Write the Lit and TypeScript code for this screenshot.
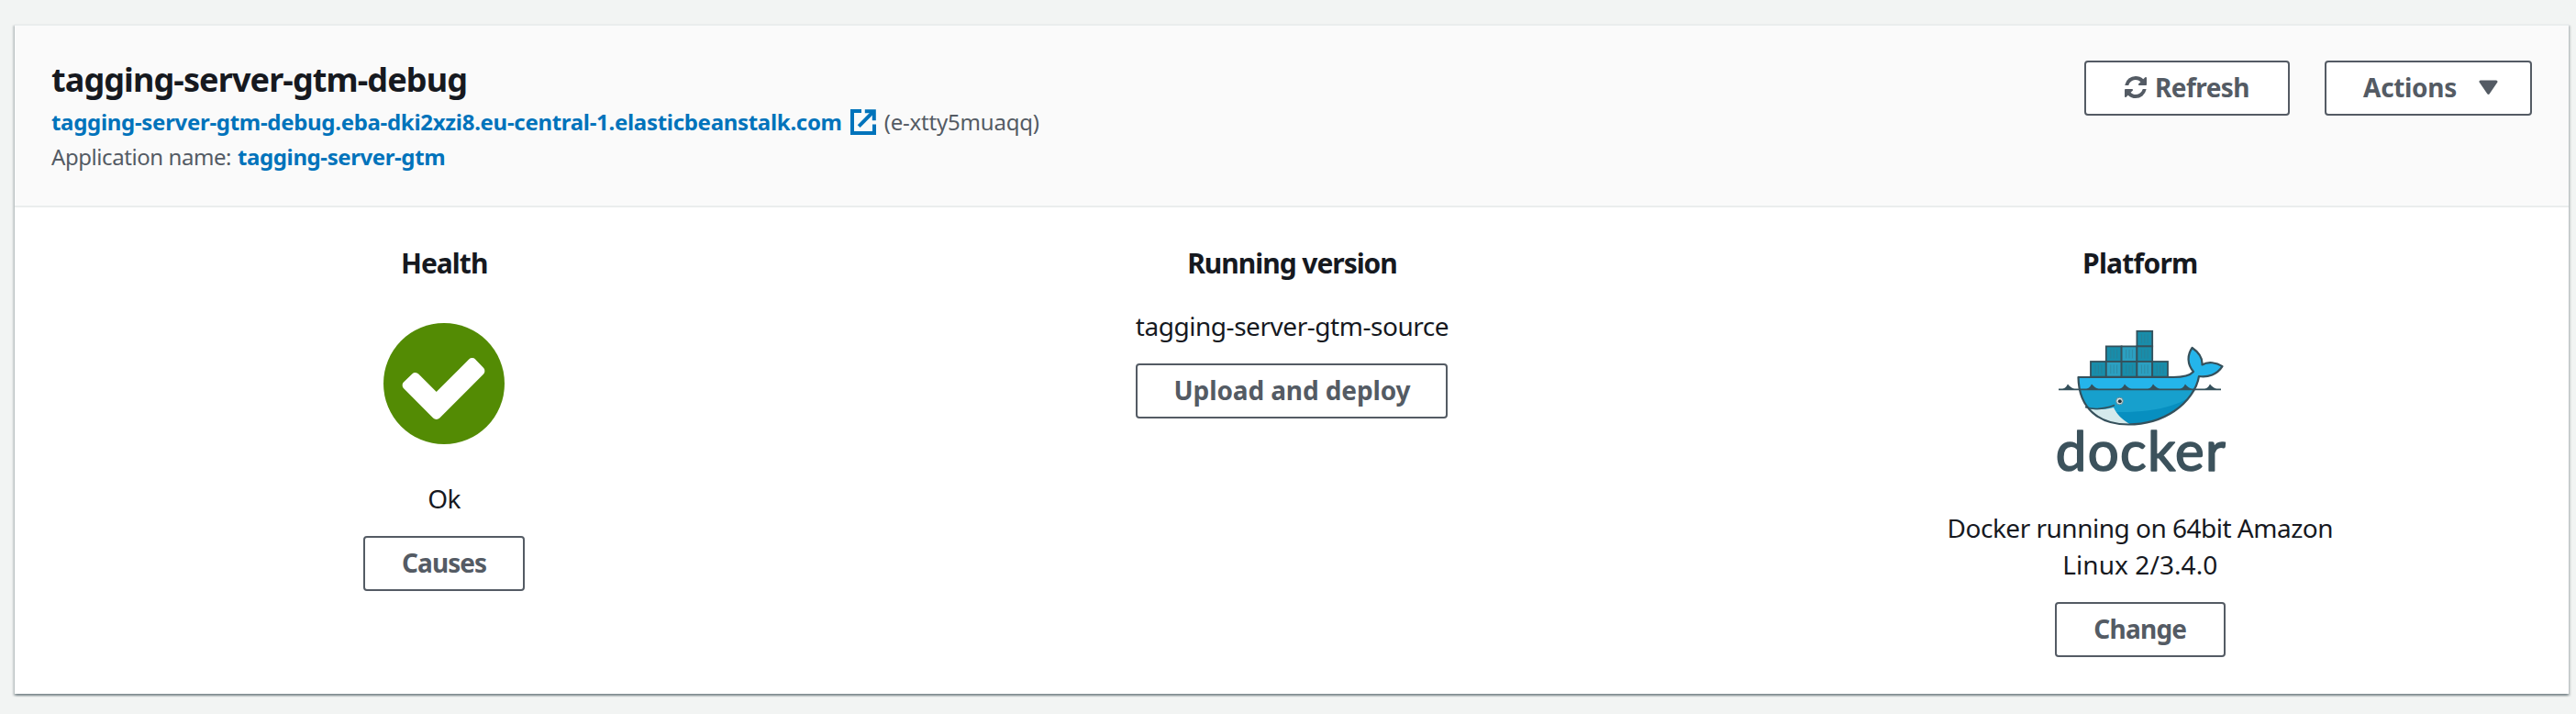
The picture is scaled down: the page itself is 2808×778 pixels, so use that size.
import { LitElement, html, svg, css } from "lit";
import { customElement } from "lit/decorators.js";

const refreshIcon = html`<svg class="refresh-icon" viewBox="0 0 1536 1536" aria-hidden="true">
  <path d="M1511 928q0 5-1 7-64 268-268 434.5T764 1536q-146 0-282.5-55T238 1324l-129 129q-19 19-45 19t-45-19-19-45V960q0-26 19-45t45-19h448q26 0 45 19t19 45-19 45l-137 137q71 66 161 102t187 36q134 0 250-65t186-179q11-17 53-117 8-23 30-23h192q13 0 22.5 9.5t9.5 22.5zm25-800v448q0 26-19 45t-45 19h-448q-26 0-45-19t-19-45 19-45l138-138Q969 256 768 256q-134 0-250 65T332 500q-11 17-53 117-8 23-30 23H50q-13 0-22.5-9.5T18 608v-7q65-268 270-434.5T768 0q146 0 284 55.5T1297 212l130-129q19-19 45-19t45 19 19 45z" />
</svg>`;

const externalIcon = html`<svg class="external-icon" viewBox="0 0 28 28" aria-hidden="true">
  <path d="M12 2H2V26H26V16.5" />
  <path d="M9.2 18.6L24.5 3.2" />
  <path d="M15.8 2.200H25.800V12.2" />
</svg>`;

const caretIcon = html`<svg class="caret-icon" viewBox="0 0 21 16" aria-hidden="true">
  <path d="M2 2H19L10.5 14.3Z" />
</svg>`;

const checkIcon = html`<svg class="check-icon" viewBox="0 0 132 132" role="img" aria-label="Ok">
  <circle cx="66" cy="66" r="66" />
  <path d="M25.6 67.8L34.7 59.1L57.7 82.1L96.7 43.1L105.4 52.2L57.7 99.9Z" />
</svg>`;

const containers: [number, number, boolean][] = [
  [94.4, 10.8, false],
  [60.8, 27.4, false], [77.6, 27.4, true], [94.4, 27.4, false],
  [44, 44, false], [60.8, 44, true], [77.6, 44, false], [94.4, 44, true], [111.2, 44, false],
];

const waves = [20, 46, 82, 113, 148, 175];

const bodyPath =
  "M30.5 61H134C144 61 152 59.500 156 55C149 47 149 37 154.600 29C162 34 166 40 165.500 47.500C172 43.500 181 45 187.500 49.200C182 58 172 61.500 162 60C160 73 150 88 135 98C120 108 104 112.500 85 112.500C54 112.500 31 96 30.500 61Z";

const dockerLogo = html`<svg class="docker-logo" viewBox="0 0 196 190" role="img" aria-label="docker">
  <defs>
    <clipPath id="hull"><path d=${bodyPath} /></clipPath>
  </defs>
  ${containers.map(
    ([x, y, light]) => svg`<g>
      <rect class=${light ? "box light" : "box"} x=${x} y=${y} width="16.8" height="16.6" />
      <path class="slats" d=${`M${x + 5} ${y + 3.5}v9.600m3.400 -9.600v9.600m3.400 -9.600v9.600`} />
    </g>`
  )}
  <path class="sky" d=${bodyPath} />
  <g clip-path="url(#hull)">
    <rect class="sea" x="0" y="74" width="196" height="45" />
    <path class="deep" d="M165 74C145 90 120 100 70 99L84 114H165Z" />
    <path class="jaw" d="M38 94C48 97.500 58 96.500 69 94C72 101 78 107 88 113H50Z" />
  </g>
  <path class="mouth" d="M38 93.500C48 97 59 95.500 70 91.500" />
  <circle class="eye" cx="75.500" cy="87" r="3.800" />
  <circle class="pupil" cx="75.800" cy="87.200" r="2" />
  <path class="line" d=${bodyPath} />
  <path class="waterline" d="M9 74.300H186" />
  ${waves.map(
    (x) => svg`<path class="wave" d=${`M${x - 9} 75Q${x - 3} 73 ${x - 1} 68.500Q${x + 2} 72.500 ${x + 9} 75Z`} />`
  )}
  <text class="wordmark" x="5.800" y="162.800" textLength="185" lengthAdjust="spacing">docker</text>
</svg>`;

@customElement("app-root")
export class AppRoot extends LitElement {
  static styles = css`
    :host {
      display: block;
      box-sizing: border-box;
      height: 778px;
      padding: 26px 8px 22px 16px;
      background: #f2f4f3;
      color: #16191f;
      font: 28px/40px "Noto Sans", "Open Sans", sans-serif;
    }
    .card {
      box-sizing: border-box;
      height: 730px;
      border-top: 2px solid #eaeded;
      background: #fff;
      box-shadow: 0 2px 2px rgba(0, 28, 36, 0.3), 2px 2px 2px rgba(0, 28, 36, 0.15),
        -2px 2px 2px rgba(0, 28, 36, 0.15);
    }
    .header {
      display: flex;
      justify-content: space-between;
      align-items: flex-start;
      box-sizing: border-box;
      height: 198px;
      padding: 37px 40px 0;
      border-bottom: 2px solid #eaeded;
      background: #fafafa;
    }
    h1 {
      margin: 0 0 5px;
      font-size: 36px;
      line-height: 44px;
      letter-spacing: -0.9px;
    }
    .line-row {
      display: flex;
      align-items: center;
      height: 38px;
      color: #545b64;
      font-size: 24px;
      line-height: 38px;
      white-space: nowrap;
    }
    a {
      color: #0073bb;
      font-weight: 700;
      text-decoration: none;
    }
    .url { letter-spacing: -0.3px; }
    .env-id { letter-spacing: -0.2px; }
    .app-label { margin-right: 7px; letter-spacing: -0.43px; }
    .app-link { letter-spacing: -0.4px; }
    .external-icon {
      width: 28px;
      height: 28px;
      margin: 0 9px 0 9px;
      fill: none;
      stroke: #0073bb;
      stroke-width: 4;
    }
    .actions {
      display: flex;
      gap: 38px;
      padding-top: 1px;
    }
    .btn {
      display: flex;
      align-items: center;
      justify-content: center;
      box-sizing: border-box;
      height: 60px;
      margin: 0;
      padding: 0 0 2px;
      border: 2px solid #545b64;
      border-radius: 4px;
      background: #fff;
      color: #545b64;
      font: 700 28px/40px "Noto Sans", "Open Sans", sans-serif;
      white-space: nowrap;
    }
    .refresh { width: 224px; letter-spacing: -0.55px; }
    .menu { width: 226px; padding-left: 5px; letter-spacing: -0.33px; }
    .causes { width: 176px; letter-spacing: -0.94px; }
    .upload { width: 340px; letter-spacing: -0.11px; }
    .change { width: 186px; letter-spacing: -0.76px; }
    .refresh-icon {
      width: 24px;
      height: 24px;
      margin-right: 9px;
      fill: #545b64;
    }
    .caret-icon {
      width: 21px;
      height: 16px;
      margin-left: 24px;
      fill: #545b64;
      stroke: #545b64;
      stroke-width: 3;
      stroke-linejoin: round;
    }
    .columns {
      display: grid;
      grid-template-columns: repeat(3, 1fr);
      padding: 39px 5px 0 6px;
    }
    .column {
      display: flex;
      flex-direction: column;
      align-items: center;
      text-align: center;
    }
    h2 {
      margin: 0;
      font-size: 30px;
      line-height: 44px;
    }
    .health-title { letter-spacing: -0.96px; }
    .version-title { letter-spacing: -1.04px; }
    .platform-title { letter-spacing: -0.76px; }
    p { margin: 0 0 21px; }
    .ok { letter-spacing: -0.5px; }
    .source { margin-top: 26px; letter-spacing: -0.46px; }
    .platform-name { width: 440px; letter-spacing: -0.5px; }
    .platform-version { letter-spacing: 0.07px; }
    .check-icon {
      width: 132px;
      height: 132px;
      margin: 43px 0 39px;
    }
    .check-icon circle { fill: #538b04; }
    .check-icon path {
      fill: #fff;
      stroke: #fff;
      stroke-width: 10;
      stroke-linejoin: round;
    }
    .docker-logo {
      width: 196px;
      height: 190px;
      margin: 41px 0 15px;
    }
    .box { fill: #188daa; stroke: #35505b; stroke-width: 1.8; }
    .box.light { fill: #2ba0c1; }
    .slats { fill: none; stroke: #35788e; stroke-width: 0.9; opacity: 0.6; }
    .sky { fill: #24b5eb; }
    .sea { fill: #17a0cd; }
    .deep { fill: #078fc0; }
    .jaw { fill: #d5eaec; }
    .mouth { fill: none; stroke: #35505b; stroke-width: 1.6; }
    .eye { fill: #d9e7e8; stroke: #6b8e98; stroke-width: 1; }
    .pupil { fill: #26343b; }
    .line { fill: none; stroke: #35505b; stroke-width: 2.2; stroke-linejoin: round; }
    .waterline { stroke: #35505b; stroke-width: 1.8; }
    .wave { fill: #35505b; }
    .wordmark {
      fill: #3c525c;
      stroke: #3c525c;
      stroke-width: 1.6;
      stroke-linejoin: round;
      font: 400 60px Lato, sans-serif;
    }
  `;

  render() {
    return html`
      <section class="card">
        <header class="header">
          <div>
            <h1>tagging-server-gtm-debug</h1>
            <div class="line-row">
              <a class="url">tagging-server-gtm-debug.eba-dki2xzi8.eu-central-1.elasticbeanstalk.com</a>
              ${externalIcon}
              <span class="env-id">(e-xtty5muaqq)</span>
            </div>
            <div class="line-row">
              <span class="app-label">Application name:</span>
              <a class="app-link">tagging-server-gtm</a>
            </div>
          </div>
          <div class="actions">
            <button class="btn refresh">${refreshIcon}Refresh</button>
            <button class="btn menu">Actions${caretIcon}</button>
          </div>
        </header>
        <div class="columns">
          <div class="column">
            <h2 class="health-title">Health</h2>
            ${checkIcon}
            <p class="ok">Ok</p>
            <button class="btn causes">Causes</button>
          </div>
          <div class="column">
            <h2 class="version-title">Running version</h2>
            <p class="source">tagging-server-gtm-source</p>
            <button class="btn upload">Upload and deploy</button>
          </div>
          <div class="column">
            <h2 class="platform-title">Platform</h2>
            ${dockerLogo}
            <p class="platform-name">
              Docker running on 64bit Amazon <span class="platform-version">Linux 2/3.4.0</span>
            </p>
            <button class="btn change">Change</button>
          </div>
        </div>
      </section>
    `;
  }
}
